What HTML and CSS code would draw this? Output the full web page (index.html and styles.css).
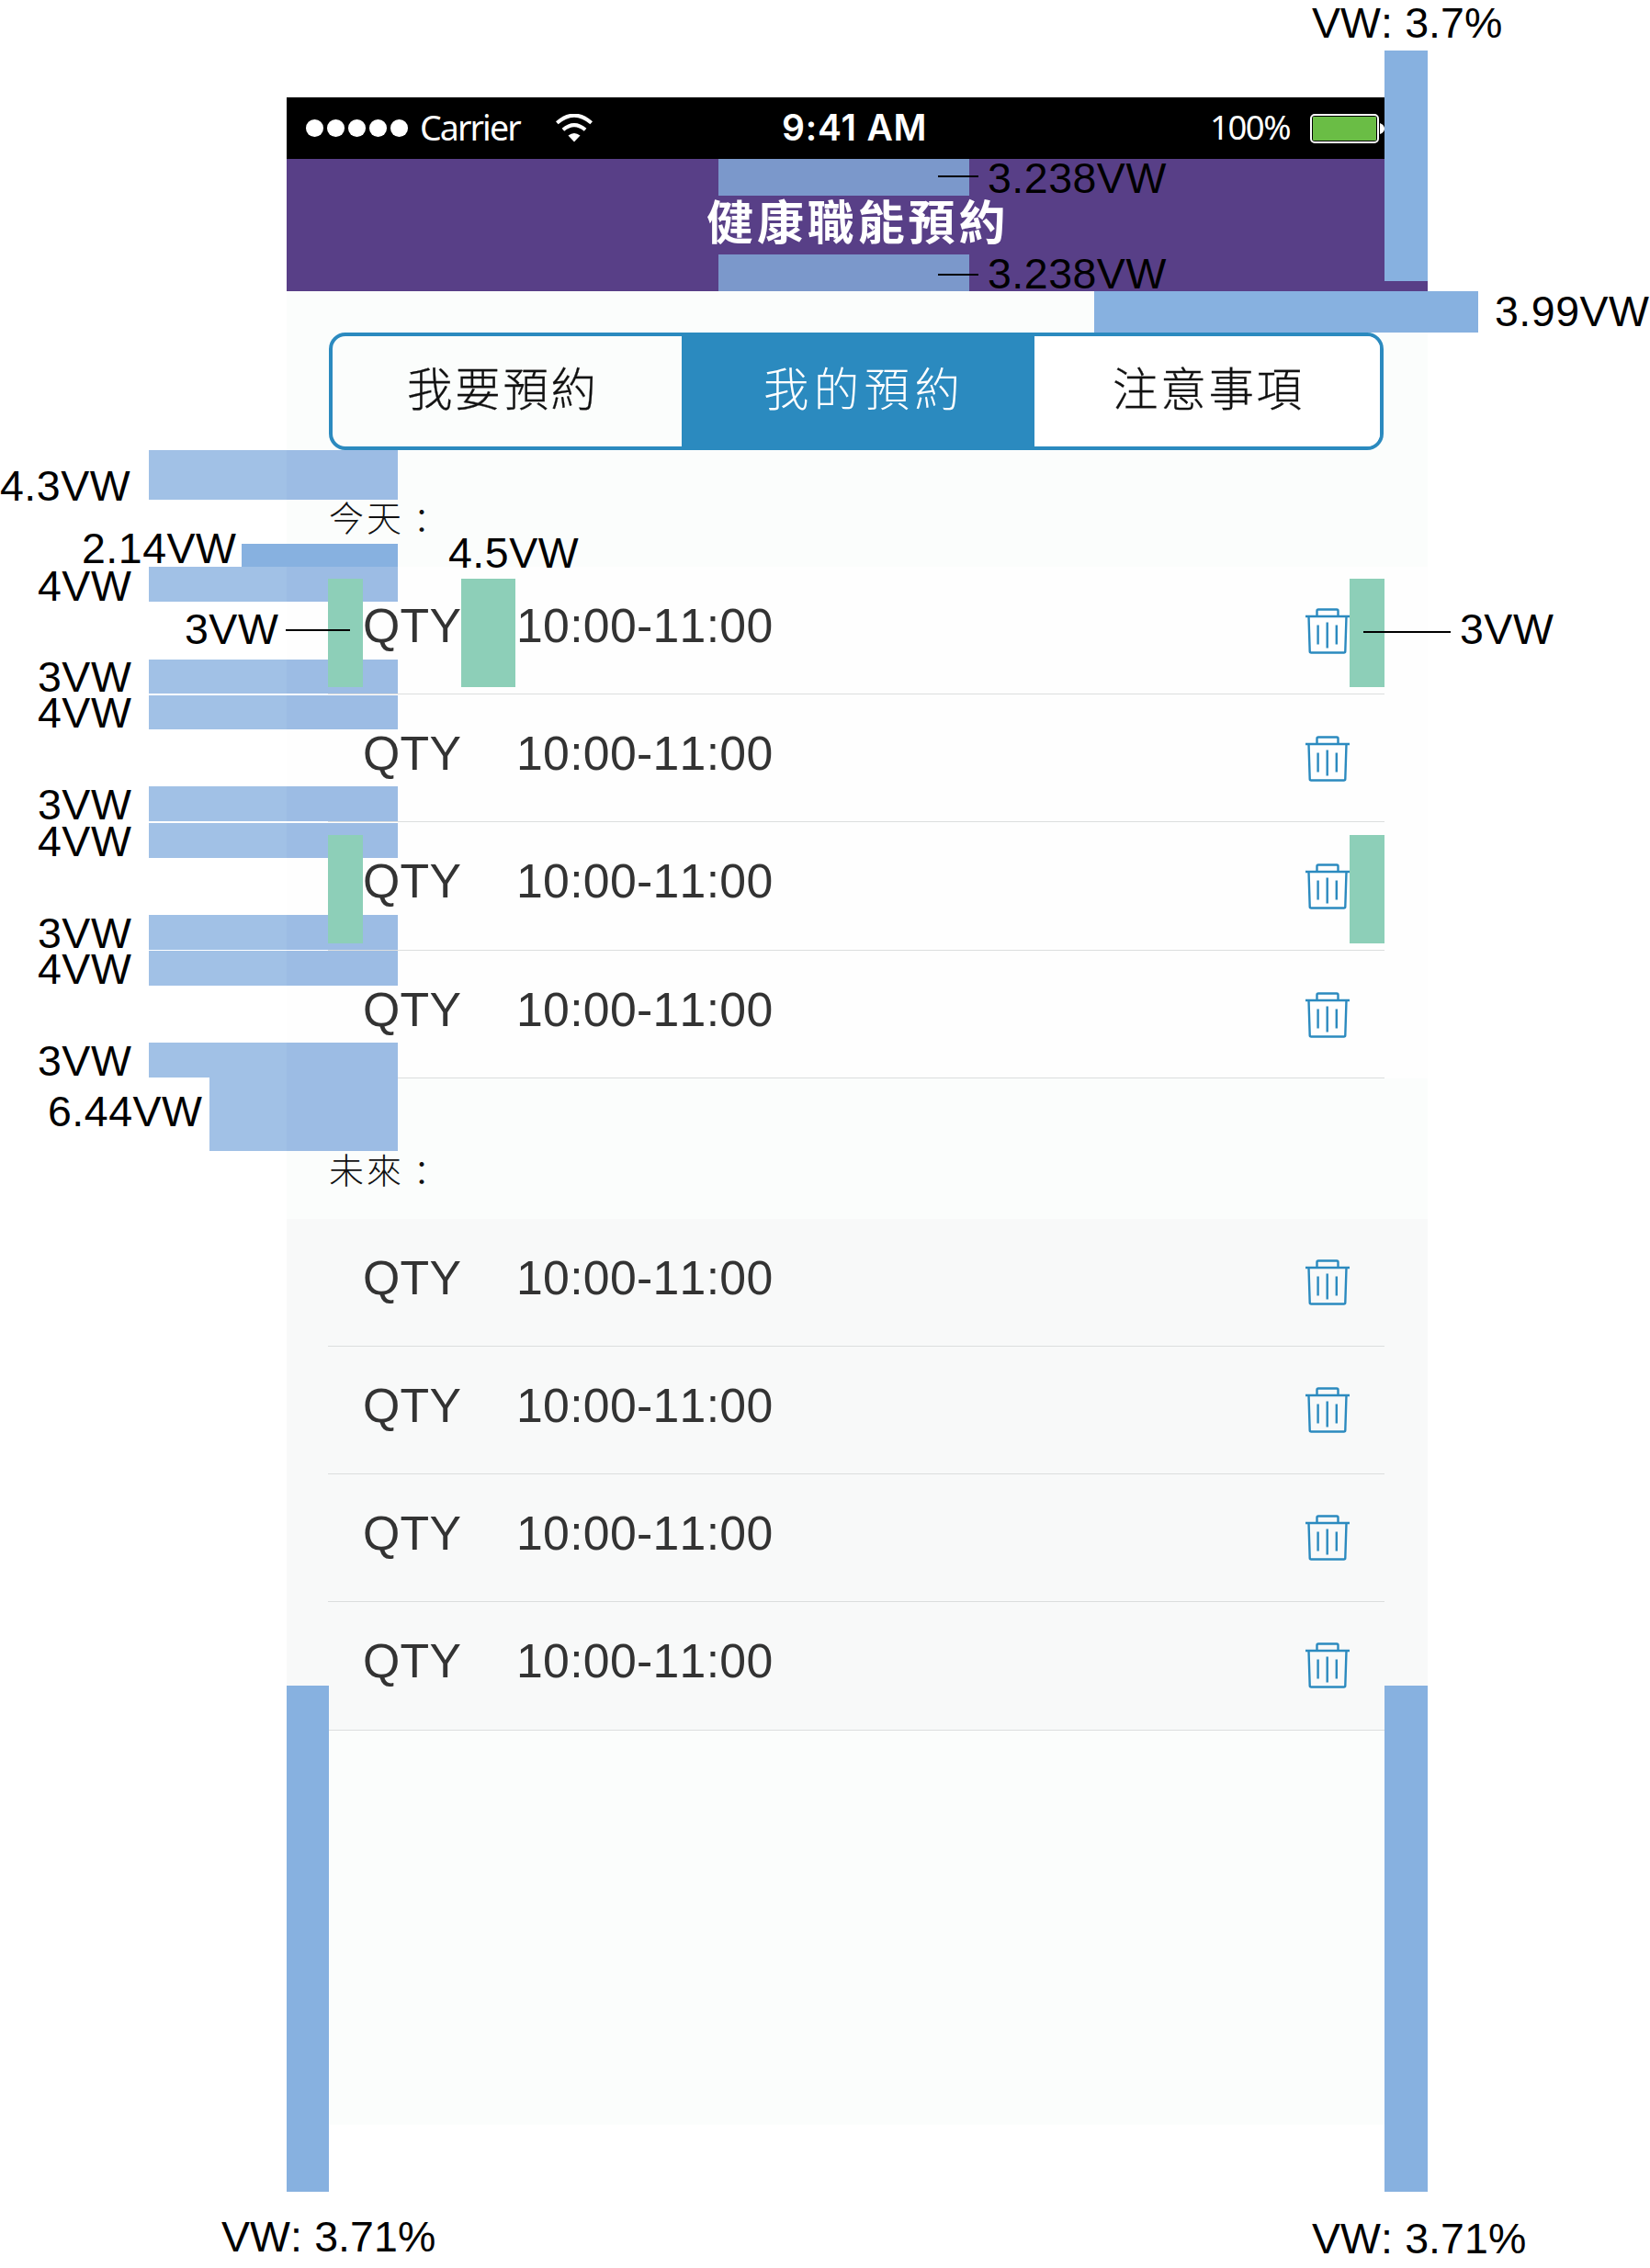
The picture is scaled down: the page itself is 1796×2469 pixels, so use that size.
FILE: index.html
```html
<!DOCTYPE html>
<html lang="zh-Hant">
<head>
<meta charset="utf-8">
<title>健康職能預約</title>
<link rel="stylesheet" href="styles.css">
</head>
<body>
<svg class="defs" width="0" height="0" aria-hidden="true">
  <symbol id="trash" viewBox="0 0 48 50">
    <path d="M0 9h48M12.500 9V3q0-1.500 1.500-1.500h20q1.500 0 1.500 1.500v6M3.500 9l1.200 38q0 1.500 1.500 1.500h35.600q1.500 0 1.500-1.500L44.500 9M13.600 18.500v21M23.700 15.500v28M33.800 18.500v21" fill="none" stroke="#2b8abf" stroke-width="2.400"/>
  </symbol>
</svg>
<main class="phone">
  <div class="status">
    <div class="signal"><i></i><i></i><i></i><i></i><i></i></div>
    <span class="carrier">Carrier</span>
    <svg class="wifi" viewBox="0 0 40 31"><path d="M1.300 9.800Q20-6.600 38.700 9.800" fill="none" stroke="#fff" stroke-width="4"/><path d="M7.900 17.300Q20 7 32.100 17.300" fill="none" stroke="#fff" stroke-width="4"/><path d="M13.500 23.600Q20 18.200 26.500 23.600L20 30.500z" fill="#fff"/></svg>
    <span class="clock">9:41 AM</span>
    <span class="percent">100%</span>
    <svg class="battery" viewBox="0 0 82 32"><rect x="1" y="1" width="73" height="30" rx="4" fill="none" stroke="#fff" stroke-width="2"/><rect x="3" y="3" width="69" height="26" rx="1" fill="#6abd45"/><path d="M76 10q5 2 5 6t-5 6z" fill="#fff"/></svg>
  </div>
  <header class="title">健康職能預約</header>
  <nav class="tabs">
    <span class="tab">我要預約</span>
    <span class="tab active">我的預約</span>
    <span class="tab plain">注意事項</span>
  </nav>
  <h2 class="day today">今天<span class="colon">：</span></h2>
  <ul class="list">
    <li class="row"><span class="name">QTY</span><span class="time">10:00-11:00</span><svg class="trash"><use href="#trash"/></svg></li>
    <li class="row"><span class="name">QTY</span><span class="time">10:00-11:00</span><svg class="trash"><use href="#trash"/></svg></li>
    <li class="row"><span class="name">QTY</span><span class="time">10:00-11:00</span><svg class="trash"><use href="#trash"/></svg></li>
    <li class="row"><span class="name">QTY</span><span class="time">10:00-11:00</span><svg class="trash"><use href="#trash"/></svg></li>
  </ul>
  <h2 class="day future">未來<span class="colon">：</span></h2>
  <ul class="list muted">
    <li class="row"><span class="name">QTY</span><span class="time">10:00-11:00</span><svg class="trash"><use href="#trash"/></svg></li>
    <li class="row"><span class="name">QTY</span><span class="time">10:00-11:00</span><svg class="trash"><use href="#trash"/></svg></li>
    <li class="row"><span class="name">QTY</span><span class="time">10:00-11:00</span><svg class="trash"><use href="#trash"/></svg></li>
    <li class="row"><span class="name">QTY</span><span class="time">10:00-11:00</span><svg class="trash"><use href="#trash"/></svg></li>
  </ul>
</main>

<!-- Spacing marks laid over the screen -->
<div class="mark head head-top"></div>
<div class="mark head head-bottom"></div>
<div class="mark solid side-top"></div>
<div class="mark solid nav-gap"></div>
<div class="mark solid side-left"></div>
<div class="mark solid side-right"></div>
<div class="mark pale p1"></div>
<div class="mark solid day-gap"></div>
<div class="mark pale p2"></div>
<div class="mark pale p3"></div>
<div class="mark pale p4"></div>
<div class="mark pale p5"></div>
<div class="mark pale p6"></div>
<div class="mark pale p7"></div>
<div class="mark pale p8"></div>
<div class="mark pale p9"></div>
<div class="mark pale p10"></div>
<div class="mark green g1"></div>
<div class="mark green g2"></div>
<div class="mark green g3"></div>
<div class="mark green g4"></div>
<div class="mark green g5"></div>
<div class="mark line l1"></div>
<div class="mark line l2"></div>
<div class="mark line l3"></div>
<div class="mark line l4"></div>

<span class="label wide t-side">VW: 3.7%</span>
<span class="label t-head1">3.238VW</span>
<span class="label t-head2">3.238VW</span>
<span class="label t-nav">3.99VW</span>
<span class="label t-43">4.3VW</span>
<span class="label t-214">2.14VW</span>
<span class="label t-45">4.5VW</span>
<span class="label t-in">3VW</span>
<span class="label t-out">3VW</span>
<span class="label rail r1">4VW</span>
<span class="label rail r2">3VW</span>
<span class="label rail r3">4VW</span>
<span class="label rail r4">3VW</span>
<span class="label rail r5">4VW</span>
<span class="label rail r6">3VW</span>
<span class="label rail r7">4VW</span>
<span class="label rail r8">3VW</span>
<span class="label t-644">6.44VW</span>
<span class="label wide t-bl">VW: 3.71%</span>
<span class="label wide t-br">VW: 3.71%</span>
</body>
</html>
```
FILE: styles.css
```css
* { box-sizing: border-box; }
body {
  margin: 0;
  position: relative;
  width: 1796px;
  height: 2469px;
  padding: 106px 0 0 312px;
  overflow: hidden;
  background: #fff;
  font-family: "Liberation Sans", "Noto Sans CJK TC", sans-serif;
  font-kerning: none;
}
.defs { position: absolute; }

.phone { width: 1242px; height: 2207px; background: #fbfdfc; }

.status { display: flex; align-items: center; height: 67px; background: #000; color: #fff; padding-left: 21px; }
.signal { display: flex; gap: 4.500px; width: 124px; }
.signal i { width: 18.600px; height: 18.600px; border-radius: 50%; background: #fff; }
.carrier { width: 148px; font: 400 37.500px/65px "Noto Sans", sans-serif; letter-spacing: -1.900px; padding-bottom: 2px; white-space: nowrap; }
.wifi { width: 40px; height: 31px; }
.clock { margin-left: 206px; width: 200px; font: 600 39px/65px Inter, sans-serif; letter-spacing: 0.800px; padding-bottom: 2px; white-space: nowrap; }
.percent { margin-left: 266px; width: 109px; font: 400 36.500px/65px "Noto Sans", sans-serif; letter-spacing: -1.500px; padding-bottom: 2px; white-space: nowrap; }
.battery { width: 82px; height: 32px; }

.title {
  height: 144px;
  background: #583f87;
  color: #fff;
  font: 700 51px/132px "Noto Sans CJK TC", sans-serif;
  letter-spacing: 3.900px;
  padding-left: 457px;
}

.tabs {
  display: grid;
  grid-template-columns: 380px 384px 1fr;
  width: 1148px;
  height: 128px;
  margin: 45px 0 0 46px;
  border: 4px solid #2b8abf;
  border-radius: 18px;
  overflow: hidden;
}
.tab {
  color: #111;
  font: 300 49.500px/109px "Noto Sans CJK TC", sans-serif;
  letter-spacing: 2.700px;
  padding-left: 81px;
  -webkit-text-stroke: 0.300px currentColor;
}
.tab.active { background: #2b8abf; color: #fff; letter-spacing: 5.300px; padding-left: 89px; -webkit-text-stroke: 0; }
.tab.plain { background: #fff; padding-left: 85px; }

.day { margin: 0; padding-left: 46px; color: #111; font: 300 38px/50px "Noto Sans CJK TC", sans-serif; letter-spacing: 3px; }
.today { height: 127px; padding-top: 47px; }
.future { height: 153px; padding-top: 73px; }
.colon { position: relative; top: 3px; }

.list { margin: 0; padding: 0 47px 0 45px; list-style: none; background: #fefefe; }
.list.muted { background: #f8f9f9; }
.row {
  display: flex;
  align-items: flex-start;
  height: 139.200px;
  padding: 35px 38px 0 38px;
  border-bottom: 1px solid #dcdede;
  color: #333;
  font-size: 51.750px;
  line-height: 58px;
}
.name { width: 167px; letter-spacing: 0.300px; }
.time { flex: 1; letter-spacing: 0.300px; }
.trash { width: 48px; height: 50px; margin-top: 10px; }
.muted .trash { margin-top: 9px; }

.mark { position: absolute; }
.head { left: 782px; width: 273px; height: 40px; background: #7b98cb; }
.head-top { top: 173px; }
.head-bottom { top: 277px; }
.solid { background: #87b1e0; }
.side-top { left: 1507px; top: 55px; width: 47px; height: 251px; }
.nav-gap { left: 1191px; top: 317px; width: 418px; height: 45px; }
.side-left { left: 312px; top: 1835px; width: 46px; height: 551px; }
.side-right { left: 1507px; top: 1835px; width: 47px; height: 551px; }
.day-gap { left: 263px; top: 592px; width: 170px; height: 25px; }
.pale { left: 162px; width: 271px; height: 38px; background: linear-gradient(90deg, #a1c1e6 150px, #9cbce4 150px); }
.p1 { top: 490px; height: 54px; }
.p2 { top: 617px; }
.p3 { top: 718px; height: 37px; }
.p4 { top: 757px; height: 37px; }
.p5 { top: 856px; }
.p6 { top: 896px; }
.p7 { top: 996px; }
.p8 { top: 1035px; }
.p9 { top: 1135px; }
.p10 { left: 228px; top: 1173px; width: 205px; height: 80px; background: linear-gradient(90deg, #a1c1e6 84px, #9cbce4 84px); }
.green { width: 38px; height: 118px; background: #8dcfb8; }
.g1 { left: 357px; top: 630px; }
.g2 { left: 502px; top: 630px; width: 59px; }
.g3 { left: 1469px; top: 630px; }
.g4 { left: 357px; top: 909px; }
.g5 { left: 1469px; top: 909px; }
.line { height: 2px; background: #000; }
.l1 { left: 311px; top: 685px; width: 70px; }
.l2 { left: 1484px; top: 687px; width: 95px; }
.l3 { left: 1021px; top: 191px; width: 44px; }
.l4 { left: 1021px; top: 298px; width: 44px; }

.label { position: absolute; margin-top: 7px; color: #000; font-size: 46.500px; letter-spacing: 0.500px; line-height: 38px; white-space: nowrap; }
.label.wide { letter-spacing: 0.100px; }
.t-side { left: 1428px; top: -1px; }
.t-head1 { left: 1075px; top: 168px; }
.t-head2 { left: 1075px; top: 272px; }
.t-nav { left: 1627px; top: 313px; }
.t-43 { left: 0; top: 503px; }
.t-214 { left: 89px; top: 571px; }
.t-45 { left: 488px; top: 576px; }
.t-in { left: 201px; top: 659px; }
.t-out { left: 1589px; top: 659px; }
.rail { left: 41px; }
.r1 { top: 612px; }
.r2 { top: 711px; }
.r3 { top: 750px; }
.r4 { top: 850px; }
.r5 { top: 890px; }
.r6 { top: 990px; }
.r7 { top: 1029px; }
.r8 { top: 1129px; }
.t-644 { left: 52px; top: 1184px; }
.t-bl { left: 241px; top: 2409px; }
.t-br { left: 1428px; top: 2411px; }
```
